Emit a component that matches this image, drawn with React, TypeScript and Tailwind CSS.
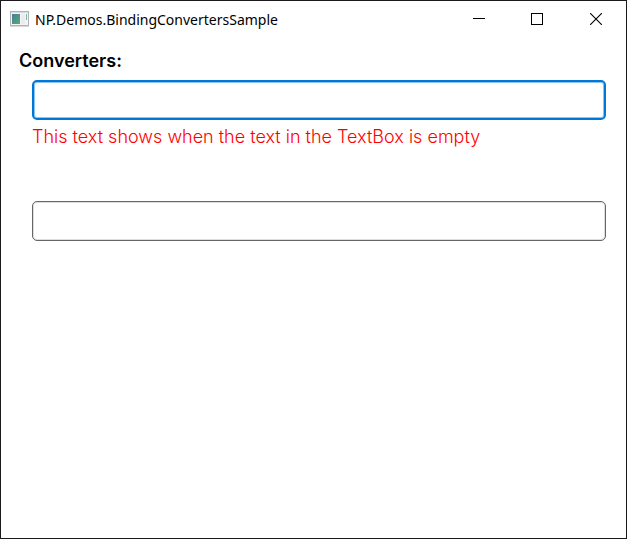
import React from "react";

function AppIcon() {
  return (
    <svg width="20" height="16" viewBox="0 0 20 16" aria-hidden="true" className="shrink-0">
      <defs>
        <linearGradient id="pane" x1="0" y1="0" x2="1" y2="1">
          <stop offset="0" stopColor="#4a7c9b" />
          <stop offset="1" stopColor="#57ab78" />
        </linearGradient>
      </defs>
      <rect x="0.5" y="0.5" width="18" height="14" fill="#f4f4f5" stroke="#b0b2b5" />
      <rect x="1" y="1" width="17" height="1" fill="#d8dade" />
      <rect x="0" y="15" width="19" height="1" fill="#d9d9d9" />
      <rect x="2" y="3" width="8" height="10" fill="url(#pane)" />
      <rect x="11" y="3" width="4" height="10" fill="#ececee" />
      <rect x="16" y="3" width="1" height="6" fill="#57a08a" opacity="0.75" />
    </svg>
  );
}

const captionButton = "flex h-9 flex-1 items-center justify-center hover:bg-gray-200";

function TitleBar() {
  return (
    <header className="flex h-9 items-center justify-between pr-px pl-[9px]">
      <div className="flex items-center gap-[5px]">
        <AppIcon />
        <h1 className="pt-0.5 font-['Noto_Sans',sans-serif] text-sm whitespace-nowrap text-black">
          NP.Demos.BindingConvertersSample
        </h1>
      </div>
      <div className="flex w-[175px] shrink-0" role="group" aria-label="Window controls">
        <button type="button" aria-label="Minimize" className={captionButton}>
          <svg width="12" height="12" viewBox="0 0 12 12" shapeRendering="crispEdges">
            <path d="M0 5.5H12" stroke="#000" />
          </svg>
        </button>
        <button type="button" aria-label="Maximize" className={captionButton}>
          <svg width="12" height="12" viewBox="0 0 12 12" shapeRendering="crispEdges">
            <rect x="0.5" y="0.5" width="11" height="11" fill="none" stroke="#000" />
          </svg>
        </button>
        <button type="button" aria-label="Close" className={captionButton}>
          <svg width="12" height="12" viewBox="0 0 12 12">
            <path d="M0 0L12 12M12 0L0 12" stroke="#000" strokeWidth="1.1" />
          </svg>
        </button>
      </div>
    </header>
  );
}

export default function App() {
  return (
    <div className="flex min-h-screen flex-col border border-[#1b191c] bg-white font-['Inter',sans-serif]">
      <TitleBar />
      <main className="px-[18px] pt-3">
        <h2 className="text-lg leading-6 font-semibold text-black">Converters:</h2>
        <div className="mt-[7px] ml-[13px] mr-[2px]">
          <input
            type="text"
            aria-label="First value"
            aria-describedby="empty-note"
            className="block h-10 w-full rounded-[5px] border-2 border-[#0078d7] bg-white px-2 text-lg shadow-[inset_0_0_0_1px_#8cc3ee] outline-none"
          />
          <p id="empty-note" className="mt-1 text-lg leading-[26px] font-light text-[#ff0000]">
            This text shows when the text in the TextBox is empty
          </p>
          <input
            type="text"
            aria-label="Second value"
            className="mt-[51px] block h-10 w-full rounded-[5px] border border-[#666666] bg-white px-2 text-lg shadow-[inset_0_0_0_1px_#dedede] outline-none focus:border-[#0078d7]"
          />
        </div>
      </main>
    </div>
  );
}
